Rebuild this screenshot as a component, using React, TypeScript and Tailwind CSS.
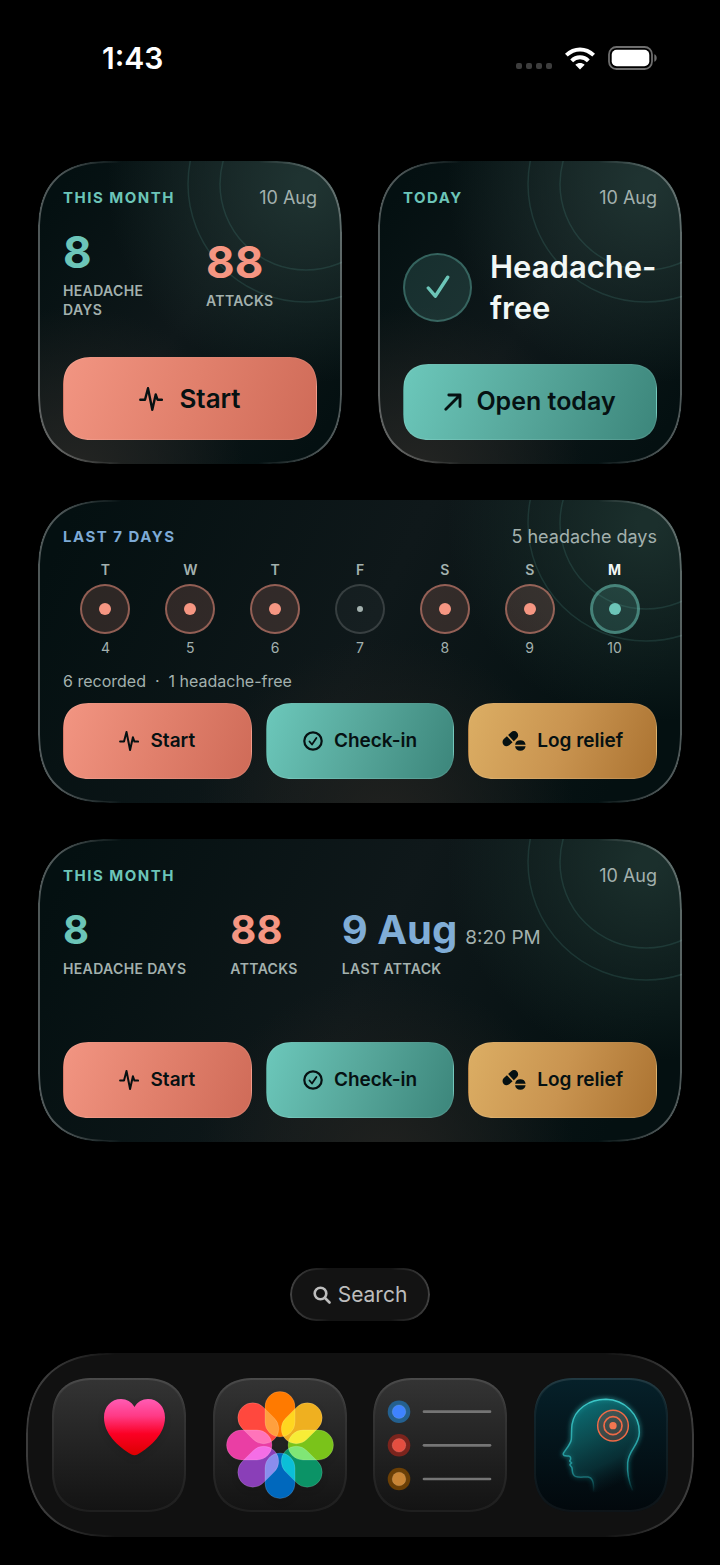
import type { ReactNode } from 'react';
import { cva } from 'class-variance-authority';
import clsx from 'clsx';

type IconProps = {
  className?: string;
};

const PulseIcon = ({ className }: IconProps) => (
  <svg viewBox="0 0 24 24" className={className} fill="none" stroke="currentColor" strokeWidth="2.4" strokeLinecap="round" strokeLinejoin="round" aria-hidden="true">
    <path d="M1.3 12.7H6L9 1.2l4.3 21.6 3.4-15.3 1.8 5.2H23" />
  </svg>
);

const ArrowIcon = ({ className }: IconProps) => (
  <svg viewBox="0 0 18 18" className={className} fill="none" stroke="currentColor" strokeWidth="2.8" strokeLinecap="round" strokeLinejoin="round" aria-hidden="true">
    <path d="M1.8 16.2 16 2M4.8 2H16v11.6" />
  </svg>
);

const CheckCircleIcon = ({ className }: IconProps) => (
  <svg viewBox="0 0 20 20" className={className} fill="none" stroke="currentColor" strokeLinecap="round" strokeLinejoin="round" aria-hidden="true">
    <circle cx="10" cy="10" r="8.7" strokeWidth="2.2" />
    <path d="m6.5 10.5 2.5 3 4.4-6.5" strokeWidth="1.8" />
  </svg>
);

const PillsIcon = ({ className }: IconProps) => (
  <svg viewBox="0 0 70 60" className={className} fill="currentColor" aria-hidden="true">
    <g transform="translate(24 23) rotate(-43)">
      <path d="M-2.5-12.5H-15a12.5 12.5 0 0 0 0 25h12.5z" />
      <path d="M2.5-12.5H15a12.5 12.5 0 0 1 0 25H2.5z" />
    </g>
    <path d="M38.2 41a16 16 0 0 1 31.6 0z" />
    <path d="M38.2 46a16 16 0 0 0 31.6 0z" />
  </svg>
);

const buttonStyles = cva(
  'flex w-full items-center justify-center border border-white/8 bg-linear-110 font-semibold text-[#061112] [corner-shape:superellipse(1.3)]',
  {
    variants: {
      tone: {
        coral: 'from-[#f29582] via-[#e1806c] to-[#cf6b58]',
        teal: 'from-[#6cc8bb] via-[#56a69a] to-[#3c867b]',
        amber: 'from-[#dcae64] via-[#c99450] to-[#ab7331]'
      },
      size: {
        tall: 'h-[83px] gap-4 rounded-[30px] text-[26px]',
        large: 'h-[76px] gap-[14px] rounded-[28px] text-[25px]',
        compact: 'h-[76px] gap-[11px] rounded-[28px] text-[19px]'
      }
    }
  }
);

type ActionButtonProps = {
  tone: 'coral' | 'teal' | 'amber';
  size?: 'tall' | 'large' | 'compact';
  icon: ReactNode;
  children: ReactNode;
};

const ActionButton = ({ tone, size = 'compact', icon, children }: ActionButtonProps) => (
  <button type="button" className={buttonStyles({ tone, size })}>
    {icon}
    <span className="whitespace-nowrap">{children}</span>
  </button>
);

const ActionRow = () => (
  <div className="mt-auto grid grid-cols-3 gap-[14px]">
    <ActionButton tone="coral" icon={<PulseIcon className="size-5" />}>
      Start
    </ActionButton>
    <ActionButton tone="teal" icon={<CheckCircleIcon className="size-5" />}>
      Check-in
    </ActionButton>
    <ActionButton tone="amber" icon={<PillsIcon className="h-5 w-6" />}>
      Log relief
    </ActionButton>
  </div>
);

type WidgetProps = {
  title: string;
  meta: string;
  accent?: 'teal' | 'blue';
  wide?: boolean;
  children: ReactNode;
};

const cardShape = 'rounded-[72px] [corner-shape:superellipse(1.35)]';

const Widget = ({ title, meta, accent = 'teal', wide = false, children }: WidgetProps) => (
  <section
    className={clsx(
      'relative isolate flex min-h-[303px] flex-col overflow-hidden p-[25px] pb-6',
      cardShape,
      wide
        ? 'col-span-2 bg-[radial-gradient(circle_at_calc(100%_-_35px)_22px,#1b2f2c_10px,transparent_200px),radial-gradient(circle_at_54%_108%,#20211f_10px,transparent_190px),linear-gradient(115deg,#041011_5%,#0f181a_50%,#041011_90%)]'
        : 'bg-[radial-gradient(circle_at_calc(100%_-_35px)_22px,#1f3331_10px,transparent_200px),radial-gradient(circle_at_12%_104%,#232422_10px,transparent_170px),linear-gradient(125deg,#041011_8%,#0f181a_50%,#041011_92%)]'
    )}
  >
    <svg viewBox="0 0 240 240" className="absolute -top-[97px] -right-[84px] -z-10 size-60" fill="none" stroke="#6cc5b8" strokeOpacity="0.14" strokeWidth="1.5" aria-hidden="true">
      <circle cx="120" cy="120" r="118" />
      <circle cx="120" cy="120" r="86" />
    </svg>
    <div
      className={clsx(
        'pointer-events-none absolute inset-0 border-2 border-white/30 mask-[linear-gradient(to_right,black_20px,transparent_84px,transparent_calc(100%_-_84px),black_calc(100%_-_20px))]',
        cardShape
      )}
    />
    <header className="flex h-6 items-center justify-between">
      <h2 className={clsx('text-[15px] font-bold tracking-widest', accent === 'blue' ? 'text-[#7daad6]' : 'text-[#6cc5b8]')}>
        {title}
      </h2>
      <span className="text-lg text-[#a3b1ae]">{meta}</span>
    </header>
    {children}
  </section>
);

const statTones = {
  teal: 'text-[#6cc5b8]',
  coral: 'text-[#f59682]',
  blue: 'text-[#80add6]'
};

type StatProps = {
  value: string;
  label: string;
  tone: keyof typeof statTones;
  note?: string;
  large?: boolean;
};

const Stat = ({ value, label, tone, note, large = false }: StatProps) => (
  <div className="flex flex-col gap-1">
    <p className="flex items-baseline gap-2 leading-[50px] whitespace-nowrap">
      <span className={clsx('font-bold', large ? 'text-[44px]' : 'text-[40px]', statTones[tone])}>{value}</span>
      {note && <span className="text-[19px] leading-6 text-[#a3b1ae]">{note}</span>}
    </p>
    <p className="text-sm leading-[19px] font-semibold tracking-wide text-[#a3b1ae]">{label}</p>
  </div>
);

type Day = {
  weekday: string;
  date: number;
  status: 'headache' | 'none' | 'free';
};

const days: Day[] = [
  { weekday: 'T', date: 4, status: 'headache' },
  { weekday: 'W', date: 5, status: 'headache' },
  { weekday: 'T', date: 6, status: 'headache' },
  { weekday: 'F', date: 7, status: 'none' },
  { weekday: 'S', date: 8, status: 'headache' },
  { weekday: 'S', date: 9, status: 'headache' },
  { weekday: 'M', date: 10, status: 'free' }
];

const DayColumn = ({ weekday, date, status }: Day) => (
  <li className="flex flex-col items-center gap-1 text-sm leading-5 text-[#a3b1ae]">
    <span className={clsx(status === 'free' ? 'font-bold text-[#f2f8f6]' : 'font-semibold')}>{weekday}</span>
    <span
      className={clsx(
        'flex size-[50px] items-center justify-center rounded-full',
        status === 'headache' && 'border-2 border-[#f59682]/50 bg-[#f59682]/17',
        status === 'none' && 'border-2 border-white/15 bg-white/3',
        status === 'free' && 'border-3 border-[#6cc5b8]/50 bg-[#6cc5b8]/18'
      )}
    >
      <span
        className={clsx(
          'rounded-full',
          status === 'headache' && 'size-3 bg-[#f59682]',
          status === 'none' && 'size-[6px] bg-[#a3b1ae]',
          status === 'free' && 'size-3 bg-[#6cc5b8]'
        )}
      />
    </span>
    <span>{date}</span>
  </li>
);

const StatusBar = () => (
  <div className="flex h-9 items-center justify-between pr-[62px] pl-[102px]">
    <time className="text-[30px] leading-9 font-semibold text-white">1:43</time>
    <div className="flex items-center gap-[13px]">
      <div className="flex gap-1 self-end pb-px">
        <span className="size-[6px] rounded-xs bg-[#3d3d3d]" />
        <span className="size-[6px] rounded-xs bg-[#3d3d3d]" />
        <span className="size-[6px] rounded-xs bg-[#3d3d3d]" />
        <span className="size-[6px] rounded-xs bg-[#3d3d3d]" />
      </div>
      <svg viewBox="0 0 90 68" className="h-[23px] w-[30px]" fill="none" stroke="white" strokeWidth="12" aria-label="Wi-Fi" role="img">
        <path d="M4 24C28 1 62 1 86 24" />
        <path d="M20 41c14-14 36-14 50 0" />
        <path d="M31 53c8-7 20-7 28 0L45 67z" fill="white" stroke="none" />
      </svg>
      <svg viewBox="0 0 50 24" className="h-6 w-[50px]" aria-label="Battery full" role="img">
        <rect x="1" y="1" width="43" height="22" rx="7.5" fill="none" stroke="#6e6e6e" strokeWidth="1.8" />
        <rect x="3.7" y="3.7" width="37.6" height="16.6" rx="5" fill="white" />
        <path d="M46.3 8.2c3.2 1.2 3.2 6.4 0 7.6z" fill="#6e6e6e" />
      </svg>
    </div>
  </div>
);

const HeartArt = () => (
  <svg viewBox="0 0 134 134" className="size-full drop-shadow-md" aria-hidden="true">
    <defs>
      <linearGradient id="heart" x1="0" y1="0" x2="0" y2="1">
        <stop offset="0" stopColor="#ff5cb4" />
        <stop offset="0.3" stopColor="#ff3a86" />
        <stop offset="0.62" stopColor="#fb0024" />
        <stop offset="1" stopColor="#dc0000" />
      </linearGradient>
    </defs>
    <path
      d="M82.5 29C79.5 23.7 74.6 21 69 21c-9.6 0-17 7.6-17 18.5 0 16 13.6 29 27.5 37 2 1 4 1 6 0C99.4 68.5 113 55.5 113 39.5 113 28.6 105.6 21 96 21c-5.6 0-10.5 2.7-13.5 8z"
      fill="url(#heart)"
    />
  </svg>
);

const petals = [
  { angle: 0, color: '#ff7a00' },
  { angle: 45, color: '#efb020' },
  { angle: 90, color: '#7ac31a' },
  { angle: 135, color: '#0b9366' },
  { angle: 180, color: '#0068bd' },
  { angle: 225, color: '#8a3fb8' },
  { angle: 270, color: '#ea3ea4' },
  { angle: 315, color: '#ff483e' }
];

const FlowerArt = () => (
  <svg viewBox="0 0 134 134" className="size-full drop-shadow-md" aria-hidden="true">
    <g className="isolate">
      {petals.map(({ angle, color }) => (
        <rect
          key={angle}
          x="52"
          y="13.5"
          width="30"
          height="45.5"
          rx="15"
          fill={color}
          stroke="white"
          strokeOpacity="0.18"
          strokeWidth="0.8"
          transform={`rotate(${angle} 67 67)`}
          className="mix-blend-screen"
        />
      ))}
    </g>
  </svg>
);

const listItems = [
  { y: 33.7, outer: '#24608f', inner: '#3f83ff' },
  { y: 67.3, outer: '#7b241d', inner: '#e44e40' },
  { y: 101, outer: '#6b3f05', inner: '#c98535' }
];

const ListArt = () => (
  <svg viewBox="0 0 134 134" className="size-full" aria-hidden="true">
    {listItems.map(({ y, outer, inner }) => (
      <g key={y}>
        <circle cx="26" cy={y} r="11.3" fill={outer} />
        <circle cx="26" cy={y} r="6.8" fill={inner} stroke="white" strokeOpacity="0.12" />
        <path d={`M51 ${y}h66`} stroke="#757575" strokeWidth="2.7" strokeLinecap="round" />
      </g>
    ))}
  </svg>
);

const headPath =
  'M178 343C180 322 178 299 162 297 150 296 136 300 124 295 113 290 116 280 114 270 113 265 107 264 108 259L113 255 107 249C112 243 111 235 104 234 97 233 85 235 88 226 95 214 110 199 112 184 113 170 112 155 114 140 121 94 165 64 216 64 272 66 316 108 316 163 316 202 284 215 281 254 279 284 284 312 296 338';

const HeadArt = () => (
  <svg viewBox="0 0 402 402" className="size-full" fill="none" aria-hidden="true">
    <defs>
      <linearGradient id="head-fill" x1="0.1" y1="0" x2="0.5" y2="1">
        <stop offset="0" stopColor="#0d8c93" stopOpacity="0.8" />
        <stop offset="0.45" stopColor="#0f6266" stopOpacity="0.7" />
        <stop offset="0.75" stopColor="#0c454b" stopOpacity="0.55" />
        <stop offset="1" stopColor="#0a2c33" stopOpacity="0" />
      </linearGradient>
      <linearGradient id="head-line" x1="0" y1="0" x2="0" y2="1">
        <stop offset="0" stopColor="#3cc8c8" />
        <stop offset="0.75" stopColor="#1f8f94" />
        <stop offset="1" stopColor="#1f8f94" stopOpacity="0" />
      </linearGradient>
      <filter id="head-glow" x="-20%" y="-20%" width="140%" height="140%">
        <feGaussianBlur stdDeviation="7" />
      </filter>
    </defs>
    <path d={headPath} stroke="url(#head-line)" strokeWidth="9" strokeOpacity="0.6" filter="url(#head-glow)" />
    <path d={headPath} fill="url(#head-fill)" stroke="url(#head-line)" strokeWidth="4.5" strokeLinejoin="round" />
    <circle cx="237" cy="143" r="46" fill="#c04a3a" fillOpacity="0.28" stroke="#ee6a47" strokeWidth="4.5" />
    <circle cx="237" cy="143" r="27" stroke="#ee6a47" strokeWidth="5" />
    <circle cx="237" cy="143" r="11" fill="#f27650" />
  </svg>
);

type DockAppProps = {
  label: string;
  dark?: boolean;
  children: ReactNode;
};

const DockApp = ({ label, dark = false, children }: DockAppProps) => (
  <button
    type="button"
    aria-label={label}
    className={clsx(
      'size-[134px] overflow-hidden rounded-[42px] bg-linear-to-b shadow-[inset_0_0_0_2px_rgba(255,255,255,0.05),inset_0_2px_1px_rgba(255,255,255,0.07)] [corner-shape:superellipse(1.3)]',
      dark ? 'from-[#06212a] to-[#02080c]' : 'from-[#343434] to-[#131313]'
    )}
  >
    {children}
  </button>
);

const dockShape = 'rounded-[84px] [corner-shape:superellipse(1.25)]';

const App = () => (
  <div className="min-h-screen bg-black pt-10 pb-7 font-['Inter',sans-serif]">
    <StatusBar />

    <main className="mt-[85px] grid grid-cols-2 gap-9 px-[38px]">
      <Widget title="THIS MONTH" meta="10 Aug">
        <div className="mt-[17px] mb-4 grid grid-cols-2 items-center gap-8">
          <Stat value="8" label="HEADACHE DAYS" tone="teal" large />
          <Stat value="88" label="ATTACKS" tone="coral" large />
        </div>
        <div className="mt-auto">
          <ActionButton tone="coral" size="tall" icon={<PulseIcon className="size-6" />}>
            Start
          </ActionButton>
        </div>
      </Widget>

      <Widget title="TODAY" meta="10 Aug">
        <div className="flex flex-1 items-center gap-[18px]">
          <span className="flex size-[69px] shrink-0 items-center justify-center rounded-full border-2 border-[#6cc5b8]/35 bg-[#6cc5b8]/17">
            <svg viewBox="0 0 24 24" className="size-6" fill="none" stroke="#6cc5b8" strokeWidth="3.4" strokeLinecap="round" strokeLinejoin="round" aria-hidden="true">
              <path d="m2.3 13 7 8.2L21.7 2.2" />
            </svg>
          </span>
          <p className="text-[31px] leading-[41px] font-semibold text-[#f2f8f6]">Headache-free</p>
        </div>
        <ActionButton tone="teal" size="large" icon={<ArrowIcon className="size-[18px]" />}>
          Open today
        </ActionButton>
      </Widget>

      <Widget title="LAST 7 DAYS" meta="5 headache days" accent="blue" wide>
        <ul className="mt-[11px] grid grid-cols-7">
          {days.map((day) => (
            <DayColumn key={day.date} {...day} />
          ))}
        </ul>
        <p className="mt-[11px] mb-[10px] text-base leading-6 text-[#a3b1ae]">6 recorded&nbsp; ·&nbsp; 1 headache-free</p>
        <ActionRow />
      </Widget>

      <Widget title="THIS MONTH" meta="10 Aug" wide>
        <div className="mt-[17px] mb-4 flex gap-11">
          <Stat value="8" label="HEADACHE DAYS" tone="teal" />
          <Stat value="88" label="ATTACKS" tone="coral" />
          <Stat value="9 Aug" note="8:20 PM" label="LAST ATTACK" tone="blue" />
        </div>
        <ActionRow />
      </Widget>
    </main>

    <div className="mt-[126px] flex justify-center">
      <button type="button" className="relative flex h-[53px] w-[140px] items-center justify-center gap-[7px] rounded-full bg-[#131313] text-[21px] text-[#bdbdbd]">
        <span className="pointer-events-none absolute inset-0 rounded-full border-2 border-white/20 mask-[linear-gradient(to_right,black,transparent_40px,transparent_calc(100%_-_40px),black)]" />
        <svg viewBox="0 0 18 18" className="size-[18px]" fill="none" stroke="currentColor" strokeWidth="2.6" strokeLinecap="round" aria-hidden="true">
          <circle cx="7.5" cy="7.5" r="5.8" />
          <path d="m12 12 4.5 4.5" />
        </svg>
        Search
      </button>
    </div>

    <nav aria-label="Dock" className={clsx('relative mx-[26px] mt-8 flex items-center justify-between bg-[#111111] px-[26px] py-[25px]', dockShape)}>
      <span
        className={clsx(
          'pointer-events-none absolute inset-0 border-2 border-white/18 mask-[linear-gradient(to_right,black_20px,transparent_90px,transparent_calc(100%_-_90px),black_calc(100%_-_20px))]',
          dockShape
        )}
      />
      <DockApp label="Health">
        <HeartArt />
      </DockApp>
      <DockApp label="Photos">
        <FlowerArt />
      </DockApp>
      <DockApp label="Reminders">
        <ListArt />
      </DockApp>
      <DockApp label="Headache tracker" dark>
        <HeadArt />
      </DockApp>
    </nav>
  </div>
);

export default App;
